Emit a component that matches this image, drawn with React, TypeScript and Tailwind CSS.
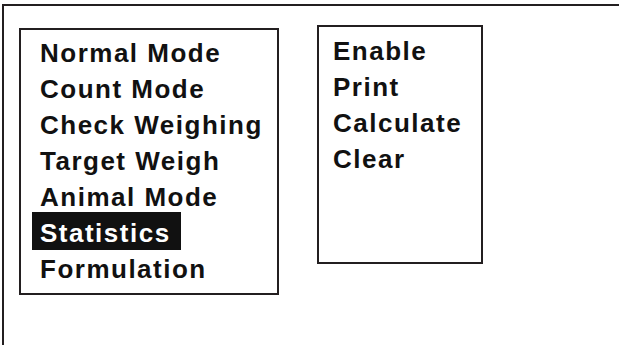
import React from "react";

const leftItems = [
  "Normal Mode",
  "Count Mode",
  "Check Weighing",
  "Target Weigh",
  "Animal Mode",
  "Statistics",
  "Formulation",
];
const rightItems = ["Enable", "Print", "Calculate", "Clear"];

export default function App() {
  return (
    <div
      className="w-[619px] h-[345px] bg-white overflow-hidden text-[#111]"
      style={{ fontFamily: '"Liberation Sans", Arial, sans-serif' }}
    >
      <div className="ml-[2px] mt-[4px] h-[341px] border-l-2 border-t-2 border-[#231f20] flex items-start">
        <div className="ml-[15px] mt-[22px] w-[260px] h-[267px] border-2 border-[#231f20] pt-[5px] pl-[19px]">
          {leftItems.map((t) =>
            t === "Statistics" ? (
              <div
                key={t}
                className="w-fit bg-[#111] text-white -ml-[8px] pl-[8px] pr-[10px] -mt-[3px] pt-[3px] h-[38px] mb-[1px] text-[26px] font-bold leading-[36px] tracking-[1.5px] whitespace-nowrap"
              >
                {t}
              </div>
            ) : (
              <div
                key={t}
                className="h-[36px] text-[26px] font-bold leading-[36px] tracking-[1.5px] whitespace-nowrap"
              >
                {t}
              </div>
            )
          )}
        </div>
        <div className="ml-[38px] mt-[19px] w-[166px] h-[239px] border-2 border-[#231f20] pt-[6px] pl-[14px]">
          {rightItems.map((t) => (
            <div
              key={t}
              className="h-[36px] text-[26px] font-bold leading-[36px] tracking-[1.5px] whitespace-nowrap"
            >
              {t}
            </div>
          ))}
        </div>
      </div>
    </div>
  );
}
